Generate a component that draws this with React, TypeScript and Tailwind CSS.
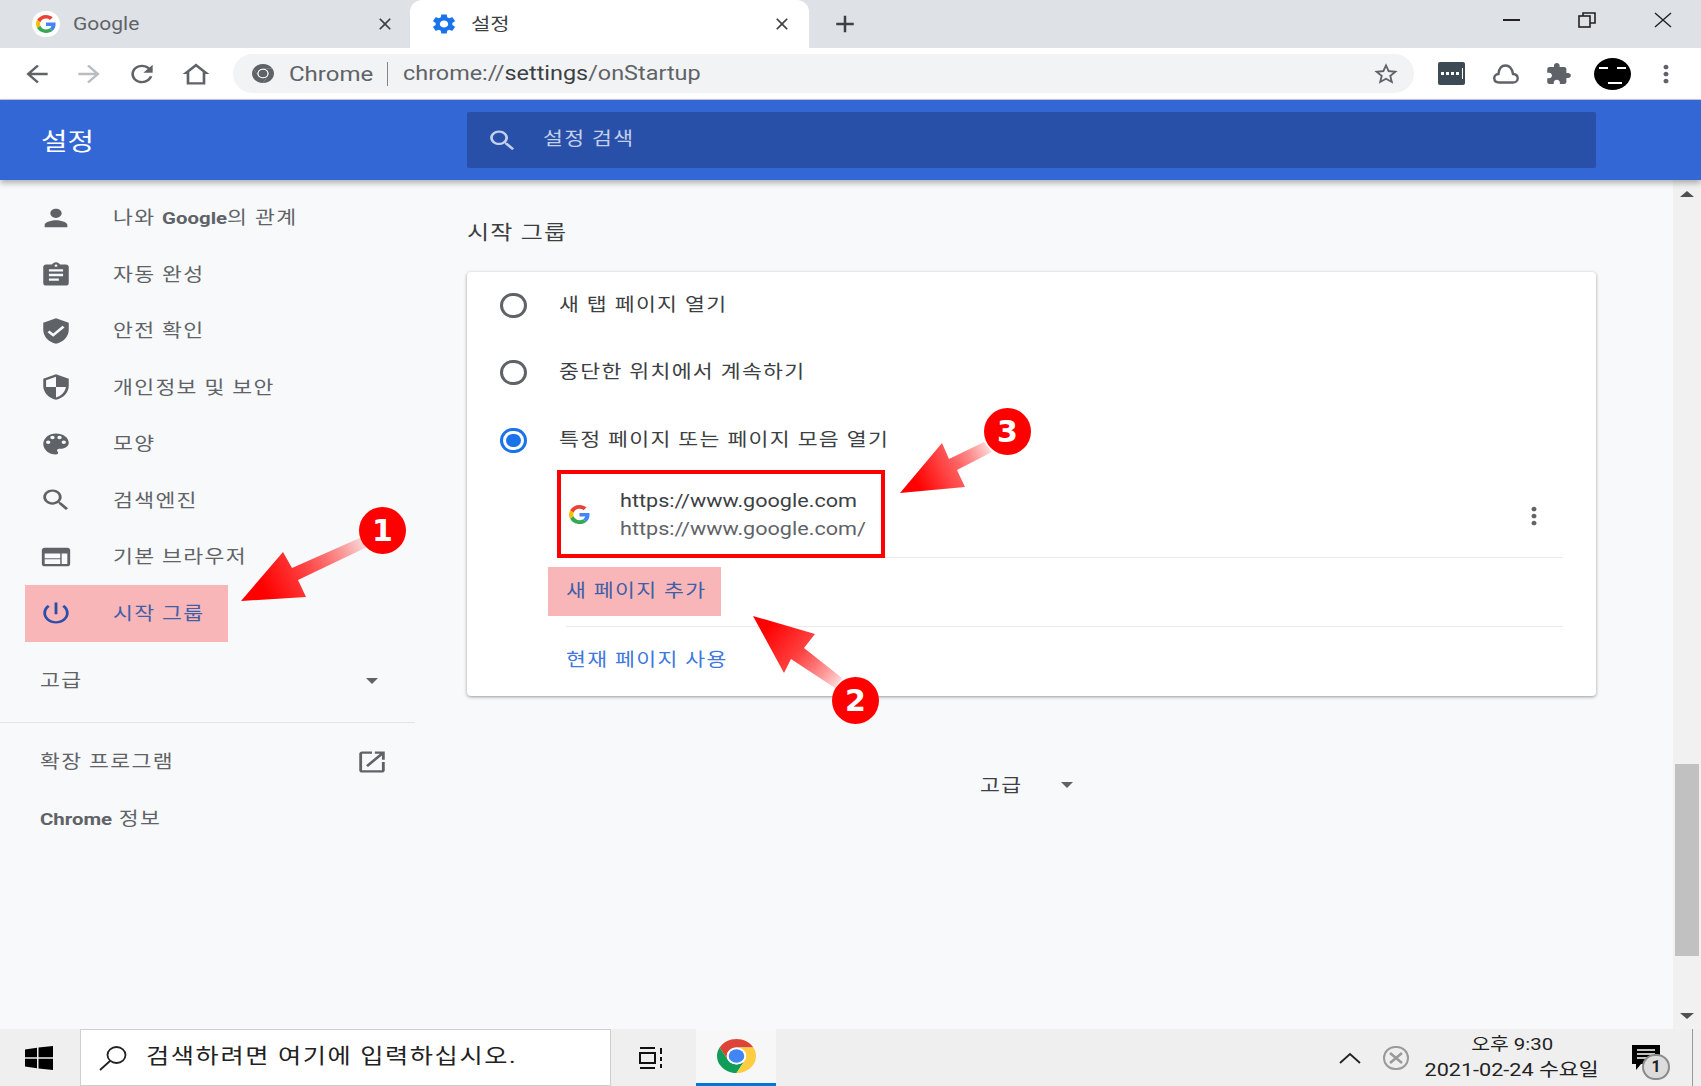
import React from 'react';

const font = '[font-family:Roboto,"Noto_Sans_CJK_KR",sans-serif]';

// the picture is stretched sideways, so text and icons are widened to match
const W: React.FC<{ className?: string; children: React.ReactNode }> = ({ className = '', children }) => (
  <span className={`inline-block origin-left scale-x-[1.2] whitespace-nowrap ${className}`}>{children}</span>
);

const Mi: React.FC<{ d: string; w?: number; h?: number; className?: string }> = ({ d, w = 34, h = 28, className = 'fill-[#5f6368]' }) => (
  <svg viewBox="0 0 24 24" width={w} height={h} preserveAspectRatio="none" className={`shrink-0 ${className}`}>
    <path d={d} />
  </svg>
);

const paths = {
  person: 'M12 12c2.21 0 4-1.79 4-4s-1.79-4-4-4-4 1.79-4 4 1.79 4 4 4zm0 2c-2.67 0-8 1.34-8 4v2h16v-2c0-2.66-5.33-4-8-4z',
  assignment: 'M19 3h-4.18C14.4 1.84 13.3 1 12 1c-1.3 0-2.4.84-2.82 2H5c-1.1 0-2 .9-2 2v14c0 1.1.9 2 2 2h14c1.1 0 2-.9 2-2V5c0-1.1-.9-2-2-2zm-7 0c.55 0 1 .45 1 1s-.45 1-1 1-1-.45-1-1 .45-1 1-1zm2 14H7v-2h7v2zm3-4H7v-2h10v2zm0-4H7V7h10v2z',
  verified: 'M12 1L3 5v6c0 5.55 3.84 10.74 9 12 5.16-1.26 9-6.45 9-12V5l-9-4zm-2 16l-4-4 1.41-1.41L10 14.17l6.59-6.59L18 9l-8 8z',
  security: 'M12 1L3 5v6c0 5.55 3.84 10.74 9 12 5.16-1.26 9-6.45 9-12V5l-9-4zm0 10.99h7c-.53 4.12-3.28 7.79-7 8.94V12H5V6.3l7-3.11v8.8z',
  palette: 'M12 3c-4.97 0-9 4.03-9 9s4.03 9 9 9c.83 0 1.5-.67 1.5-1.5 0-.39-.15-.74-.39-1.01-.23-.26-.38-.61-.38-.99 0-.83.67-1.5 1.5-1.5H16c2.76 0 5-2.24 5-5 0-4.42-4.03-8-9-8zm-5.5 9c-.83 0-1.5-.67-1.5-1.5S5.67 9 6.5 9 8 9.67 8 10.5 7.33 12 6.5 12zm3-4C8.67 8 8 7.33 8 6.5S8.67 5 9.5 5s1.5.67 1.5 1.5S10.33 8 9.5 8zm5 0c-.83 0-1.5-.67-1.5-1.5S13.67 5 14.5 5s1.5.67 1.5 1.5S15.33 8 14.5 8zm3 4c-.83 0-1.5-.67-1.5-1.5S16.67 9 17.5 9s1.5.67 1.5 1.5-.67 1.5-1.5 1.5z',
  search: 'M15.5 14h-.79l-.28-.27C15.41 12.59 16 11.11 16 9.5 16 5.91 13.09 3 9.5 3S3 5.91 3 9.5 5.91 16 9.5 16c1.61 0 3.09-.59 4.23-1.57l.27.28v.79l5 4.99L20.49 19l-4.99-5zm-6 0C7.01 14 5 11.99 5 9.5S7.01 5 9.5 5 14 7.01 14 9.5 11.99 14 9.5 14z',
  web: 'M20 4H4c-1.1 0-1.99.9-1.99 2L2 18c0 1.1.9 2 2 2h16c1.1 0 2-.9 2-2V6c0-1.1-.9-2-2-2zm-5 14H4v-4h11v4zm0-5H4V9h11v4zm5 5h-4V9h4v9z',
  power: 'M13 3h-2v10h2V3zm4.83 2.17l-1.42 1.42C17.99 7.86 19 9.81 19 12c0 3.87-3.13 7-7 7s-7-3.13-7-7c0-2.19 1.01-4.14 2.58-5.42L6.17 5.17C4.23 6.82 3 9.26 3 12c0 4.97 4.03 9 9 9s9-4.03 9-9c0-2.74-1.23-5.18-3.17-6.83z',
  open: 'M19 19H5V5h7V3H5c-1.11 0-2 .9-2 2v14c0 1.1.89 2 2 2h14c1.1 0 2-.9 2-2v-7h-2v7zM14 3v2h3.59l-9.83 9.83 1.41 1.41L19 6.41V10h2V3h-7z',
  gear: 'M19.14 12.94c.04-.3.06-.61.06-.94s-.02-.64-.07-.94l2.03-1.58c.18-.14.23-.41.12-.61l-1.92-3.32c-.12-.22-.37-.29-.59-.22l-2.39.96c-.5-.38-1.03-.7-1.62-.94l-.36-2.54c-.04-.24-.24-.41-.48-.41h-3.84c-.24 0-.43.17-.47.41l-.36 2.54c-.59.24-1.13.57-1.62.94l-2.39-.96c-.22-.08-.47 0-.59.22L2.74 8.87c-.12.21-.08.47.12.61l2.03 1.58c-.05.3-.09.63-.09.94s.02.64.07.94l-2.03 1.58c-.18.14-.23.41-.12.61l1.92 3.32c.12.22.37.29.59.22l2.39-.96c.5.38 1.03.7 1.62.94l.36 2.54c.05.24.24.41.48.41h3.84c.24 0 .44-.17.47-.41l.36-2.54c.59-.24 1.13-.56 1.62-.94l2.39.96c.22.08.47 0 .59-.22l1.92-3.32c.12-.22.07-.47-.12-.61l-2.01-1.58zM12 15.6c-1.98 0-3.6-1.62-3.6-3.6s1.62-3.6 3.6-3.6 3.6 1.62 3.6 3.6-1.62 3.6-3.6 3.6z',
  back: 'M20 11H7.83l5.59-5.59L12 4l-8 8 8 8 1.41-1.41L7.83 13H20v-2z',
  forward: 'M12 4l-1.41 1.41L16.17 11H4v2h12.17l-5.58 5.59L12 20l8-8z',
  reload: 'M17.65 6.35C16.2 4.9 14.21 4 12 4c-4.42 0-7.99 3.58-7.99 8s3.57 8 7.99 8c3.73 0 6.84-2.55 7.73-6h-2.08c-.82 2.33-3.04 4-5.65 4-3.31 0-6-2.69-6-6s2.69-6 6-6c1.66 0 3.14.69 4.22 1.78L13 11h7V4l-2.35 2.35z',
  home: 'M12 3L2 12h3v9h14v-9h3L12 3zm5 16H7v-8.8l5-4.5 5 4.5V19z',
  star: 'M22 9.24l-7.19-.62L12 2 9.19 8.63 2 9.24l5.46 4.73L5.82 21 12 17.27 18.18 21l-1.63-7.03L22 9.24zM12 15.4l-3.76 2.27 1-4.28-3.32-2.88 4.38-.38L12 6.1l1.71 4.04 4.38.38-3.32 2.88 1 4.28L12 15.4z',
  puzzle: 'M20.5 11H19V7c0-1.1-.9-2-2-2h-4V3.5C13 2.12 11.88 1 10.5 1S8 2.12 8 3.5V5H4c-1.1 0-1.99.9-1.99 2v3.8H3.5c1.49 0 2.7 1.21 2.7 2.7s-1.21 2.7-2.7 2.7H2V20c0 1.1.9 2 2 2h3.8v-1.5c0-1.49 1.21-2.7 2.7-2.7 1.49 0 2.7 1.21 2.7 2.7V22H17c1.1 0 2-.9 2-2v-4h1.5c1.38 0 2.5-1.12 2.5-2.5S21.88 11 20.5 11z',
  dots: 'M12 8c1.1 0 2-.9 2-2s-.9-2-2-2-2 .9-2 2 .9 2 2 2zm0 2c-1.1 0-2 .9-2 2s.9 2 2 2 2-.9 2-2-.9-2-2-2zm0 6c-1.1 0-2 .9-2 2s.9 2 2 2 2-.9 2-2-.9-2-2-2z',
  close: 'M19 6.41L17.59 5 12 10.59 6.41 5 5 6.41 10.59 12 5 17.59 6.41 19 12 13.41 17.59 19 19 17.59 13.41 12z',
};

const GoogleG: React.FC<{ w: number; h: number }> = ({ w, h }) => (
  <svg viewBox="0 0 48 48" width={w} height={h} preserveAspectRatio="none" className="shrink-0">
    <path fill="#EA4335" d="M24 9.5c3.54 0 6.71 1.22 9.21 3.6l6.85-6.85C35.9 2.38 30.47 0 24 0 14.62 0 6.51 5.38 2.56 13.22l7.98 6.19C12.43 13.72 17.74 9.5 24 9.5z" />
    <path fill="#4285F4" d="M46.98 24.55c0-1.57-.15-3.09-.38-4.55H24v9.02h12.94c-.58 2.96-2.26 5.48-4.78 7.18l7.73 6c4.51-4.18 7.09-10.36 7.09-17.65z" />
    <path fill="#FBBC05" d="M10.53 28.59c-.48-1.45-.76-2.99-.76-4.59s.27-3.14.76-4.59l-7.98-6.19C.92 16.46 0 20.12 0 24c0 3.88.92 7.54 2.56 10.78l7.97-6.19z" />
    <path fill="#34A853" d="M24 48c6.48 0 11.93-2.13 15.89-5.81l-7.73-6c-2.15 1.45-4.92 2.3-8.16 2.3-6.26 0-11.57-4.22-13.47-9.91l-7.98 6.19C6.51 42.62 14.62 48 24 48z" />
  </svg>
);

const ChromeLogo: React.FC<{ w: number; h: number; gray?: boolean }> = ({ w, h, gray }) => (
  <svg viewBox="4 4 40 40" width={w} height={h} preserveAspectRatio="none" className="shrink-0">
    <path fill={gray ? '#5f6368' : '#DB4437'} d="M24 14H41.32A20 20 0 0 0 6.68 14L15.34 29A10 10 0 0 1 24 14z" />
    <path fill={gray ? '#5f6368' : '#0F9D58'} d="M15.34 29L6.68 14A20 20 0 0 0 24 44L32.66 29A10 10 0 0 1 15.34 29z" />
    <path fill={gray ? '#5f6368' : '#FFCD40'} d="M32.66 29L24 44A20 20 0 0 0 41.32 14H24A10 10 0 0 1 32.66 29z" />
    <circle cx="24" cy="24" r="10" fill="#fff" />
    <circle cx="24" cy="24" r="8" fill={gray ? '#5f6368' : '#4285F4'} />
  </svg>
);

const Radio: React.FC<{ on?: boolean }> = ({ on }) => (
  <span className={`flex h-[25px] w-[27px] shrink-0 items-center justify-center rounded-full border-[3px] ${on ? 'border-[#1a73e8]' : 'border-[#5f6368]'}`}>
    {on && <span className="h-[13px] w-[15px] rounded-full bg-[#1a73e8]" />}
  </span>
);

const Row: React.FC<{ icon: string; children: React.ReactNode }> = ({ icon, children }) => (
  <div className="flex h-[56.4px] items-center">
    <div className="flex w-[113px] justify-center pr-[1px]"><Mi d={icon} /></div>
    <W className="text-[18px] tracking-[1.1px] text-[#5f6368]">{children}</W>
  </div>
);

const Caret = () => <span className="h-0 w-0 border-x-[6.5px] border-t-[6px] border-x-transparent border-t-[#5f6368]" />;

const Badge: React.FC<{ n: number; className: string }> = ({ n, className }) => (
  <div className={`absolute flex h-[47px] w-[47px] items-center justify-center rounded-full bg-[#ff0000] text-[30px] font-bold leading-none text-white [font-family:'DejaVu_Sans',sans-serif] ${className}`}>{n}</div>
);

const Arrows = () => (
  <svg className="pointer-events-none absolute left-0 top-0" width="1701" height="1086">
    <defs>
      <linearGradient id="a1" gradientUnits="userSpaceOnUse" x1="262" y1="585" x2="365" y2="535">
        <stop offset="0" stopColor="#ff0000" /><stop offset="0.35" stopColor="#ff3a3a" /><stop offset="1" stopColor="#ff0000" stopOpacity="0.08" />
      </linearGradient>
      <linearGradient id="a2" gradientUnits="userSpaceOnUse" x1="765" y1="628" x2="840" y2="690">
        <stop offset="0" stopColor="#ff0000" /><stop offset="0.4" stopColor="#ff3a3a" /><stop offset="1" stopColor="#ff0000" stopOpacity="0.08" />
      </linearGradient>
      <linearGradient id="a3" gradientUnits="userSpaceOnUse" x1="915" y1="480" x2="992" y2="445">
        <stop offset="0" stopColor="#ff0000" /><stop offset="0.4" stopColor="#ff4a4a" /><stop offset="1" stopColor="#ff0000" stopOpacity="0.08" />
      </linearGradient>
    </defs>
    <polygon fill="url(#a1)" points="241,601 283,552 292,568 362,537 365,548 298,580 306,597" />
    <polygon fill="url(#a2)" points="753,616 815,634 804,648 842,678 835,688 791,659 784,673" />
    <polygon fill="url(#a3)" points="900,493 942,443 949,459 984,442 992,452 957,470 965,487" />
  </svg>
);

export default function App() {
  return (
    <div className={`relative flex h-[1086px] w-[1701px] flex-col overflow-hidden bg-[#f8f9fa] ${font}`}>
      {/* tab strip */}
      <div className="flex h-[48px] shrink-0 items-center bg-[#dee1e6]">
        <div className="flex h-full w-[410px] items-center pl-[32px]">
          <span className="flex h-[26px] w-[28px] items-center justify-center rounded-full bg-white"><GoogleG w={20} h={18} /></span>
          <W className="ml-[13px] text-[17.5px] text-[#5f6368]">Google</W>
          <span className="ml-auto mr-[15px]"><Mi d={paths.close} w={20} h={20} className="fill-[#3c4043]" /></span>
        </div>
        <div className="flex h-full w-[399px] items-center rounded-t-[12px] bg-white pl-[20px]">
          <Mi d={paths.gear} w={28} h={24} className="fill-[#1a73e8]" />
          <W className="ml-[13px] text-[17.5px] text-[#3c4043]">설정</W>
          <span className="ml-auto mr-[17px]"><Mi d={paths.close} w={20} h={20} className="fill-[#3c4043]" /></span>
        </div>
        <div className="ml-[21px]"><Mi d="M19 13h-6v6h-2v-6H5v-2h6V5h2v6h6v2z" w={30} h={28} className="fill-[#3c4043]" /></div>
        <div className="ml-auto flex h-full">
          <div className="flex w-[76px] items-center justify-center pb-[8px]"><span className="h-[2px] w-[17px] bg-[#222]" /></div>
          <div className="flex w-[76px] items-center justify-center pb-[8px]">
            <svg width="18" height="16" viewBox="0 0 18 16" fill="none" stroke="#222" strokeWidth="1.6"><rect x="1" y="4" width="11" height="11" /><path d="M5 4V1h12v10h-5" /></svg>
          </div>
          <div className="flex w-[76px] items-center justify-center pb-[8px]">
            <svg width="18" height="16" viewBox="0 0 18 16" fill="none" stroke="#222" strokeWidth="1.4"><path d="M1 1l16 14M17 1L1 15" /></svg>
          </div>
        </div>
      </div>

      {/* toolbar */}
      <div className="flex h-[52px] shrink-0 items-center border-b border-[#c6cbd6] bg-white pl-[11px]">
        <div className="flex w-[52px] justify-center"><Mi d={paths.back} w={32} h={28} /></div>
        <div className="flex w-[52px] justify-center"><Mi d={paths.forward} w={32} h={28} className="fill-[#babcbe]" /></div>
        <div className="flex w-[54px] justify-center"><Mi d={paths.reload} w={32} h={28} /></div>
        <div className="flex w-[53px] justify-center"><Mi d={paths.home} w={32} h={28} /></div>
        <div className="ml-[11px] flex h-[39px] w-[1181px] items-center rounded-full bg-[#f1f3f4] pl-[19px]">
          <ChromeLogo w={22} h={19} gray />
          <W className="ml-[15px] w-[84px] text-[20px] text-[#5f6368]">Chrome</W>
          <span className="ml-[14px] h-[24px] w-px bg-[#80868b]" />
          <W className="ml-[15px] text-[19.5px] text-[#5f6368]">chrome://<span className="text-[#3c4043]">settings</span>/onStartup</W>
          <span className="ml-auto mr-[14px]"><Mi d={paths.star} w={28} h={26} /></span>
        </div>
        <div className="ml-[11px] flex items-center">
          <div className="flex w-[53.5px] justify-center">
            <span className="flex h-[23px] w-[27px] items-center justify-center gap-[2px] rounded-[2px] bg-[#3c4a54]">
              <i className="h-[3px] w-[3px] bg-white" /><i className="h-[3px] w-[3px] bg-white" /><i className="h-[3px] w-[3px] bg-white" /><i className="h-[3px] w-[3px] bg-white" /><i className="ml-px h-[11px] w-px bg-white" />
            </span>
          </div>
          <div className="flex w-[53.5px] justify-center">
            <svg width="27" height="20" viewBox="0 0 27 20" fill="none" stroke="#5f6368" strokeWidth="2.4"><path d="M7 18.500h14c6 0 6.500-8 0-8.500C20 4 17.500 1.500 13.500 1.500S7 4 6.500 10C.5 10.500 1 18.500 7 18.500z" /></svg>
          </div>
          <div className="flex w-[53.5px] justify-center"><Mi d={paths.puzzle} w={27} h={24} /></div>
          <div className="flex w-[53.5px] justify-center">
            <svg width="37" height="32" viewBox="0 0 37 32">
              <ellipse cx="18.5" cy="16" rx="18.5" ry="16" fill="#000" />
              <path d="M5 10h9M23 10h9M14 25h14" stroke="#fff" strokeWidth="2" />
            </svg>
          </div>
          <div className="flex w-[53.5px] justify-center"><Mi d={paths.dots} w={30} h={28} /></div>
        </div>
      </div>

      {/* settings header */}
      <div className="relative z-10 flex h-[80px] shrink-0 items-center bg-[#3367d6] shadow-[0_3px_6px_rgba(0,0,0,0.3)]">
        <div className="w-[467px] pl-[41px]"><W className="translate-y-[2px] text-[24px] text-white">설정</W></div>
        <div className="flex h-[56px] w-[1129px] items-center rounded-[2px] bg-[#2850a8] pl-[19px]">
          <Mi d={paths.search} w={33} h={27} className="fill-[#c4d0ea]" />
          <W className="ml-[24px] -translate-y-[2px] text-[18px] tracking-[1.1px] text-[#c4d0ea]">설정 검색</W>
        </div>
      </div>

      {/* page */}
      <div className="flex min-h-0 flex-1">
        <aside className="w-[415px] shrink-0 pt-[10px]">
          <Row icon={paths.person}>나와 <b className="text-[17px] font-bold tracking-normal">Google</b>의 관계</Row>
          <Row icon={paths.assignment}>자동 완성</Row>
          <Row icon={paths.verified}>안전 확인</Row>
          <Row icon={paths.security}>개인정보 및 보안</Row>
          <Row icon={paths.palette}>모양</Row>
          <Row icon={paths.search}>검색엔진</Row>
          <Row icon={paths.web}>기본 브라우저</Row>
          <div className="relative flex h-[57px] items-center">
            <div className="absolute inset-y-0 left-[25px] w-[203px] bg-[#f9b6b9]" />
            <div className="relative flex w-[113px] justify-center pr-[1px]"><Mi d={paths.power} className="fill-[#2a4fa8]" /></div>
            <W className="relative text-[18px] tracking-[1.1px] text-[#3f5fa6]">시작 그룹</W>
          </div>
          <div className="flex h-[81px] items-center justify-between border-b border-[#e3e4e3] pb-[2px] pl-[40px] pr-[37px]">
            <W className="text-[18px] tracking-[1.1px] text-[#5f6368]">고급</W>
            <Caret />
          </div>
          <div className="pt-[11px]">
            <div className="flex h-[57px] items-center justify-between pl-[40px] pr-[26px]">
              <W className="-translate-y-[1px] text-[18px] tracking-[1.1px] text-[#5f6368]">확장 프로그램</W>
              <Mi d={paths.open} w={34} h={28} />
            </div>
            <div className="flex h-[56px] items-center pl-[40px]">
              <W className="text-[18px] tracking-[1.1px] text-[#5f6368]"><b className="text-[17px] font-bold tracking-normal">Chrome</b> 정보</W>
            </div>
          </div>
        </aside>

        <main className="w-[1258px] shrink-0 pl-[52px]">
          <div className="flex h-[92px] items-start pt-[41px]">
            <W className="text-[20px] leading-[24px] tracking-[1px] text-[#3c4043]">시작 그룹</W>
          </div>
          <div className="h-[424px] w-[1129px] rounded-[4px] bg-white shadow-[0_1px_3px_rgba(60,64,67,0.4),0_1px_4px_rgba(60,64,67,0.15)]">
            <div className="flex h-[66px] items-center pl-[33px]"><Radio /><W className="ml-[32px] -translate-y-[1px] text-[18px] tracking-[1.1px] text-[#3c4043]">새 탭 페이지 열기</W></div>
            <div className="flex h-[68px] items-center pl-[33px]"><Radio /><W className="ml-[32px] -translate-y-[1px] text-[18px] tracking-[1.1px] text-[#3c4043]">중단한 위치에서 계속하기</W></div>
            <div className="flex h-[64px] items-center pl-[33px] pt-[4px]"><Radio on /><W className="ml-[32px] -translate-y-[1px] text-[18px] tracking-[1.1px] text-[#3c4043]">특정 페이지 또는 페이지 모음 열기</W></div>

            <div className="relative ml-[99px] mr-[33px] flex h-[88px] items-center border-b border-[#e8eaed] pl-[3px] pt-[2px]">
              <GoogleG w={21} h={19} />
              <div className="ml-[30px] flex flex-col gap-[7px]">
                <W className="text-[18px] leading-[21px] text-[#3c4043]">https://www.google.com</W>
                <W className="text-[18px] leading-[21px] text-[#5f6368]">https://www.google.com/</W>
              </div>
              <span className="ml-auto mr-[14px] pt-[2px]"><Mi d={paths.dots} w={30} h={28} className="fill-[#5f6368]" /></span>
              <div className="absolute left-[-9px] top-0 h-[88px] w-[328px] border-[4.5px] border-[#ff0000]" />
            </div>

            <div className="ml-[81px] mr-[33px] h-[68px] pt-[9px]">
              <div className="flex h-[49px] w-[173px] items-center bg-[#f9b6b9] pl-[18px]">
                <W className="-translate-y-[1px] text-[18px] tracking-[1.1px] text-[#3f5fa6]">새 페이지 추가</W>
              </div>
            </div>
            <div className="ml-[99px] mr-[33px] flex h-[66px] items-center border-t border-[#e8eaed]">
              <W className="text-[18px] tracking-[1.1px] text-[#4078e0]">현재 페이지 사용</W>
            </div>
          </div>
          <div className="mt-[77px] flex h-[24px] w-[1129px] items-center justify-center gap-[40px]">
            <W className="w-[40px] -translate-x-[6px] text-[18px] tracking-[1.1px] text-[#3c4043]">고급</W>
            <span className="flex -translate-x-[5px]"><Caret /></span>
          </div>
        </main>

        <div className="flex w-[28px] shrink-0 flex-col items-center bg-[#f1f1f1]">
          <div className="flex h-[27px] items-center"><span className="h-0 w-0 border-x-[7px] border-b-[6px] border-x-transparent border-b-[#505050]" /></div>
          <div className="mt-[557px] h-[192px] w-[24px] bg-[#c1c1c1]" />
          <div className="mt-auto flex h-[27px] items-center"><span className="h-0 w-0 border-x-[7px] border-t-[6px] border-x-transparent border-t-[#505050]" /></div>
        </div>
      </div>

      {/* taskbar */}
      <div className="flex h-[57px] shrink-0 items-center bg-[#efefef]">
        <div className="flex w-[80px] justify-center pr-[2px]">
          <svg width="28" height="24" viewBox="0 0 28 24" fill="#000"><path d="M0 3.5l12-1.8v9.6H0zM13.500 1.500L28 0v11.300H13.500zM0 12.700h12v9.600L0 20.500zM13.500 12.700H28V24l-14.500-1.500z" /></svg>
        </div>
        <div className="flex h-full w-[531px] items-center border border-[#cfcfcf] bg-white pl-[17px]">
          <svg width="30" height="26" viewBox="0 0 30 26" fill="none" stroke="#222" strokeWidth="1.8"><ellipse cx="18.500" cy="10" rx="9" ry="8" /><path d="M12 16L2 25" /></svg>
          <W className="ml-[18px] -translate-y-[1px] text-[21px] tracking-[1.35px] text-[#222]">검색하려면 여기에 입력하십시오.</W>
        </div>
        <div className="flex w-[85px] justify-center pr-[5px]">
          <svg width="28" height="24" viewBox="0 0 28 24" fill="none" stroke="#111" strokeWidth="2"><path d="M3 2h15M3 22h15M3 7h15v10H3zM24 2v6M24 11v4M24 18v4" /></svg>
        </div>
        <div className="flex h-full w-[80px] items-center justify-center border-b-[3px] border-[#0078d7] bg-[#f7f7f7]"><ChromeLogo w={39} h={34} /></div>
        <div className="ml-auto mr-[8px] flex h-full items-center">
          <svg width="22" height="12" viewBox="0 0 22 12" fill="none" stroke="#222" strokeWidth="1.8"><path d="M1 11l10-9 10 9" /></svg>
          <span className="ml-[22px] flex h-[24px] w-[26px] items-center justify-center rounded-full border-2 border-[#9a9a9a]">
            <svg width="14" height="12" viewBox="0 0 14 12" stroke="#9a9a9a" strokeWidth="2.600"><path d="M1 1l12 10M13 1L1 11" /></svg>
          </span>
          <div className="ml-[15px] flex w-[176px] flex-col items-center leading-[26px] text-[#222]">
            <span className="origin-center -translate-y-[1px] scale-x-[1.2] whitespace-nowrap text-[17px]">오후 9:30</span>
            <span className="origin-center -translate-y-[1px] scale-x-[1.2] whitespace-nowrap text-[18px]">2021-02-24 수요일</span>
          </div>
          <div className="relative ml-[32px] w-[60px]">
            <svg width="28" height="25" viewBox="0 0 28 25"><path d="M0 0h28v19H9l-5 6v-6H0z" fill="#000" /><path d="M5 5h18M5 9h18M5 13h12" stroke="#fff" strokeWidth="1.500" /></svg>
            <span className="absolute left-[10px] top-[9px] flex h-[26px] w-[28px] items-center justify-center rounded-full border-2 border-[#8b8b8b] bg-[#dcdcdc] text-[16px] font-bold text-[#222]">1</span>
          </div>
          <span className="h-full w-px bg-[#9a9a9a]" />
        </div>
      </div>

      {/* annotations */}
      <Arrows />
      <Badge n={1} className="left-[359px] top-[507px]" />
      <Badge n={2} className="left-[832px] top-[677px]" />
      <Badge n={3} className="left-[984px] top-[408px]" />
    </div>
  );
}
